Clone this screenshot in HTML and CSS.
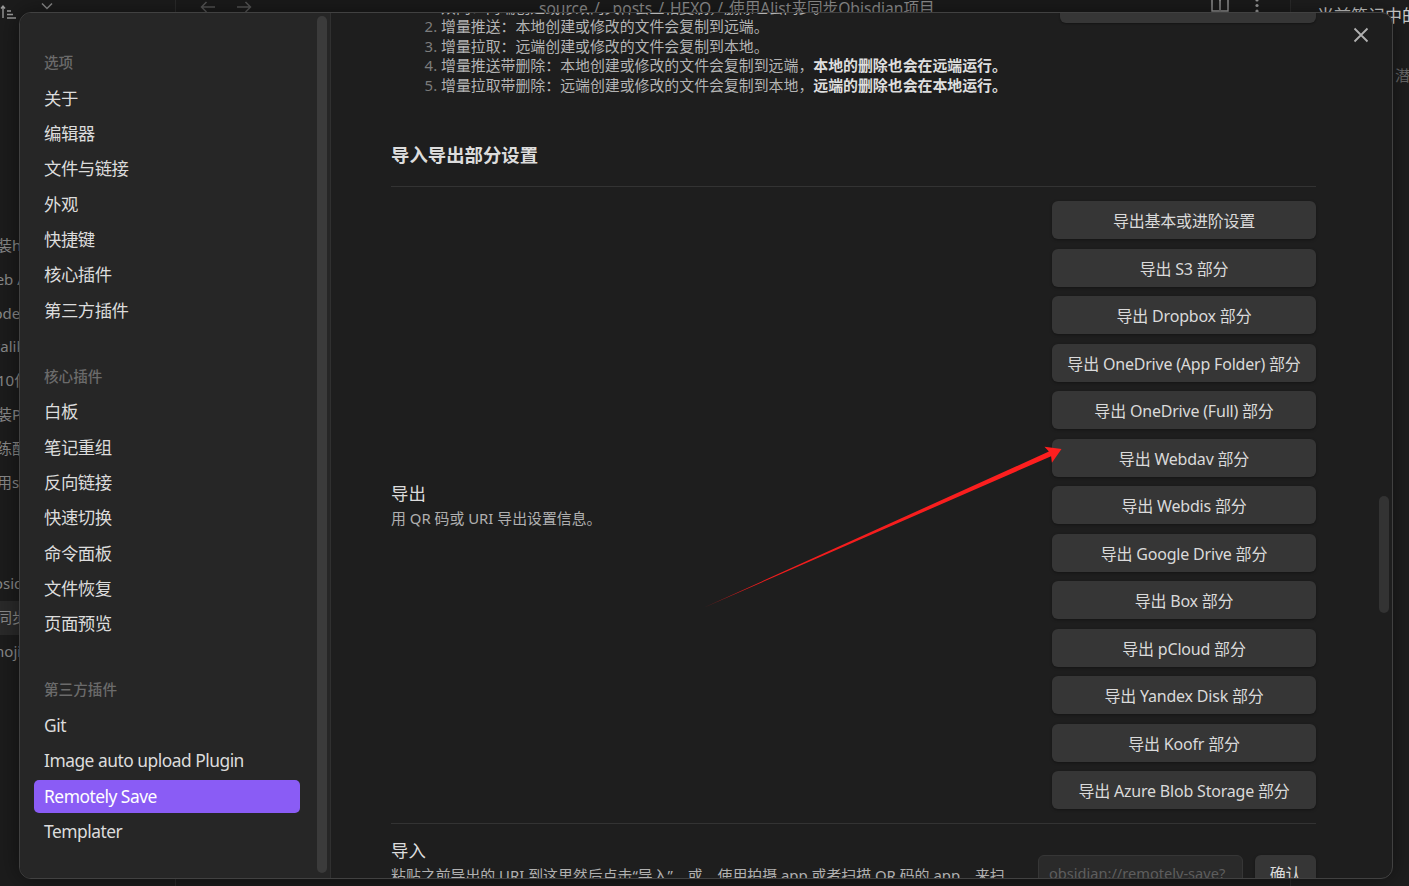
FILE: index.html
```html
<!DOCTYPE html>
<html lang="zh-CN">
<head>
<meta charset="utf-8">
<title>设置 - Remotely Save</title>
<link rel="stylesheet" href="styles.css">
</head>
<body>
<div class="app">
  <aside class="app-left">
    <div class="app-left-top">
      <svg class="ico-sort" width="18" height="16" viewBox="0 0 18 16"><path d="M3 14V2M1 4.5L3 2l2 2.5M7 7h4M7 10.5h6M7 14h9" fill="none" stroke="#9a9a9a" stroke-width="1.4"/></svg>
      <svg class="ico-chev" width="12" height="8" viewBox="0 0 12 8"><path d="M1 1.5l5 5 5-5" fill="none" stroke="#8a8a8a" stroke-width="1.5"/></svg>
    </div>
    <div class="file-list">
      <div class="file">安装hexo博客</div>
      <div class="file">Web App</div>
      <div class="file">Node编译</div>
      <div class="file">Vitalik</div>
      <div class="file">第10作品</div>
      <div class="file">安装PicGo</div>
      <div class="file">训练配置</div>
      <div class="file">使用srcset</div>
      <div class="file"></div>
      <div class="file"></div>
      <div class="file">Obsidian</div>
      <div class="file active">的同步</div>
      <div class="file">Emoji</div>
    </div>
  </aside>
  <main class="app-main">
    <div class="app-top">
      <div class="nav-arrows">
        <svg width="16" height="12" viewBox="0 0 16 12"><path d="M15 6H1.5M6.5 1L1.5 6l5 5" fill="none" stroke="#555" stroke-width="1.5"/></svg>
        <svg width="16" height="12" viewBox="0 0 16 12"><path d="M1 6h13.5M9.5 1l5 5-5 5" fill="none" stroke="#555" stroke-width="1.5"/></svg>
      </div>
      <div class="crumb"><span>_source</span><span class="sep">/</span><span>_posts</span><span class="sep">/</span><span>HEXO</span><span class="sep">/</span><span>使用Alist来同步Obisdian项目</span></div>
      <div class="top-icons">
        <svg width="18" height="14" viewBox="0 0 18 14"><path d="M1 1h6a2 2 0 0 1 2 2v11M17 1h-6a2 2 0 0 0-2 2M1 1v12h7M17 1v12h-7" fill="none" stroke="#9a9a9a" stroke-width="1.4"/></svg>
        <svg width="6" height="14" viewBox="0 0 6 14"><circle cx="3" cy="2" r="1.6" fill="#9a9a9a"/><circle cx="3" cy="7.5" r="1.6" fill="#9a9a9a"/><circle cx="3" cy="13" r="1.6" fill="#9a9a9a"/></svg>
      </div>
    </div>
  </main>
  <aside class="app-right">
    <div class="right-line">当前笔记中的</div>
    <div class="right-line dim">潜在链接</div>
  </aside>
</div>

<div class="modal">
  <nav class="sidebar">
    <div class="nav">
      <div class="group">
        <div class="group-title">选项</div>
        <div class="nav-item">关于</div>
        <div class="nav-item">编辑器</div>
        <div class="nav-item">文件与链接</div>
        <div class="nav-item">外观</div>
        <div class="nav-item">快捷键</div>
        <div class="nav-item">核心插件</div>
        <div class="nav-item">第三方插件</div>
      </div>
      <div class="group">
        <div class="group-title">核心插件</div>
        <div class="nav-item">白板</div>
        <div class="nav-item">笔记重组</div>
        <div class="nav-item">反向链接</div>
        <div class="nav-item">快速切换</div>
        <div class="nav-item">命令面板</div>
        <div class="nav-item">文件恢复</div>
        <div class="nav-item">页面预览</div>
      </div>
      <div class="group">
        <div class="group-title">第三方插件</div>
        <div class="nav-item">Git</div>
        <div class="nav-item">Image auto upload Plugin</div>
        <div class="nav-item active">Remotely Save</div>
        <div class="nav-item">Templater</div>
      </div>
    </div>
    <div class="sb-thumb"></div>
  </nav>

  <section class="content">
    <div class="scroll">
      <div class="inner">
        <div class="setting top-setting">
          <div class="info">
            <ol class="dir-list">
              <li>双向：两端创建或修改的文件会互相复制，删除也会同步。</li>
              <li>增量推送：本地创建或修改的文件会复制到远端。</li>
              <li>增量拉取：远端创建或修改的文件会复制到本地。</li>
              <li>增量推送带删除：本地创建或修改的文件会复制到远端，<strong>本地的删除也会在远端运行。</strong></li>
              <li>增量拉取带删除：远端创建或修改的文件会复制到本地，<strong>远端的删除也会在本地运行。</strong></li>
            </ol>
          </div>
          <div class="select"></div>
        </div>

        <div class="heading">导入导出部分设置</div>

        <div class="setting item">
          <div class="info">
            <div class="name">导出</div>
            <div class="desc">用 QR 码或 URI 导出设置信息。</div>
          </div>
          <div class="buttons">
            <button class="btn">导出基本或进阶设置</button>
            <button class="btn">导出 S3 部分</button>
            <button class="btn">导出 Dropbox 部分</button>
            <button class="btn">导出 OneDrive (App Folder) 部分</button>
            <button class="btn">导出 OneDrive (Full) 部分</button>
            <button class="btn">导出 Webdav 部分</button>
            <button class="btn">导出 Webdis 部分</button>
            <button class="btn">导出 Google Drive 部分</button>
            <button class="btn">导出 Box 部分</button>
            <button class="btn">导出 pCloud 部分</button>
            <button class="btn">导出 Yandex Disk 部分</button>
            <button class="btn">导出 Koofr 部分</button>
            <button class="btn">导出 Azure Blob Storage 部分</button>
          </div>
        </div>

        <div class="setting item">
          <div class="info import-info">
            <div class="name">导入</div>
            <div class="desc">粘贴之前导出的 URI 到这里然后点击“导入”，或，使用拍摄 app 或者扫描 QR 码的 app，来扫描对应的二维码。</div>
          </div>
          <div class="import-ctl">
            <input class="uri" type="text" placeholder="obsidian://remotely-save?">
            <button class="btn ok">确认</button>
          </div>
        </div>
      </div>
    </div>
    <div class="c-thumb"></div>
    <button class="close" aria-label="关闭">
      <svg width="16" height="16" viewBox="0 0 16 16"><path d="M1.5 1.5l13 13M14.5 1.5l-13 13" stroke="#b0b0b0" stroke-width="1.8" fill="none"/></svg>
    </button>
  </section>
</div>

<svg class="annot" width="1409" height="886" viewBox="0 0 1409 886">
  <defs>
    <linearGradient id="ag" x1="703" y1="608" x2="1061" y2="449" gradientUnits="userSpaceOnUse">
      <stop offset="0" stop-color="#b01818"/>
      <stop offset="0.15" stop-color="#f01c1c"/>
      <stop offset="1" stop-color="#ff1f1f"/>
    </linearGradient>
  </defs>
  <polygon points="703,608 1051.1,456.3 1051.9,462.8 1061.5,449 1044.5,446.7 1048.9,451.5" fill="url(#ag)"/>
</svg>
</body>
</html>
```
FILE: styles.css
```css
* { box-sizing: border-box; margin: 0; padding: 0; }

html, body { width: 1409px; height: 886px; }

body {
  position: relative;
  overflow: hidden;
  background: #171717;
  font-family: "Noto Sans", "Noto Sans CJK SC", sans-serif;
  color: #dadada;
}

/* ---------- background application ---------- */
.app { display: flex; height: 886px; }

.app-left {
  width: 176px;
  flex: none;
  background: #1c1c1c;
  border-right: 1px solid #2b2b2b;
  overflow: hidden;
}
.app-left-top { display: flex; align-items: flex-start; height: 229px; padding: 3px 0 0 0; }
.ico-sort { margin-top: 1px; }
.ico-chev { margin: -1px 0 0 23px; }

.file-list { display: flex; flex-direction: column; }
.file {
  height: 33.8px;
  line-height: 33.8px;
  margin-left: -18px;
  font-size: 15px;
  color: #8a8a8a;
  white-space: nowrap;
}
.file.active { background: #2a2a2a; }

.app-main { flex: 1; background: #1b1b1b; border-right: 1px solid #2b2b2b; }
.app-top { display: flex; align-items: flex-start; height: 16px; }
.nav-arrows { display: flex; gap: 20px; margin: 1px 0 0 24px; }
.crumb {
  display: flex;
  margin: -2px 0 0 280px;
  font-size: 15.6px;
  line-height: 20px;
  color: #8f8f8f;
  white-space: nowrap;
}
.sep { margin: 0 6px; }
.top-icons { display: flex; gap: 25px; margin: -2px 0 0 auto; padding-right: 30px; }

.app-right { width: 118px; flex: none; background: #1e1e1e; padding: 5px 0 0 26px; overflow: hidden; }
.right-line { font-size: 17px; line-height: 22px; color: #cfcfcf; white-space: nowrap; }
.right-line.dim { margin: 37px 0 0 78px; color: #6a6a6a; font-size: 15px; }

/* ---------- modal ---------- */
.modal {
  position: absolute;
  left: 19px;
  top: 12px;
  width: 1374px;
  height: 867px;
  display: flex;
  background: #1e1e1e;
  border: 1px solid #414141;
  border-radius: 12px;
  overflow: hidden;
  box-shadow: 0 0 24px rgba(0, 0, 0, 0.45);
}

.sidebar {
  width: 311px;
  flex: none;
  display: flex;
  background: #262626;
  border-right: 1px solid #303030;
  padding: 0 3px 5px 14px;
}
.nav { width: 266px; flex: none; padding-top: 39px; }
.group { display: flow-root; }
.group + .group { padding-top: 36.4px; }
.group-title {
  height: 20px;
  line-height: 20px;
  padding-left: 10px;
  margin-bottom: 9.5px;
  font-size: 14.6px;
  font-weight: 500;
  color: #6b6b6b;
}
.nav-item {
  height: 33px;
  line-height: 33px;
  margin-bottom: 2.4px;
  padding-left: 10px;
  border-radius: 5px;
  font-size: 17.4px;
  letter-spacing: -0.5px;
  color: #dcdcdc;
  white-space: nowrap;
}
.nav-item.active { background: #8a5cf5; color: #ffffff; }

.sb-thumb {
  width: 10px;
  margin: 3px 0 0 17px;
  background: #3b3b3b;
  border-radius: 5px;
}

/* ---------- content ---------- */
.content { flex: 1; display: flex; position: relative; overflow: hidden; }
.scroll { width: 925px; flex: none; margin-left: 60px; }
.inner { margin-top: -15.25px; }

.setting { display: flex; justify-content: space-between; }

.dir-list {
  padding-left: 50px;
  font-size: 14.9px;
  line-height: 19.5px;
  color: #b4b4b4;
}
.dir-list li::marker { color: #7c7c7c; }
.dir-list strong { color: #dedede; font-weight: 700; }

.select {
  width: 256px;
  height: 36px;
  margin-top: -10.75px;
  background: #363636;
  border-radius: 6px;
  box-shadow: 0 1px 2px rgba(0, 0, 0, 0.35);
  flex: none;
}

.heading {
  padding: 47.75px 0 19px;
  font-size: 18.4px;
  line-height: 24px;
  font-weight: 700;
  color: #dcdcdc;
}

.item {
  align-items: center;
  border-top: 1px solid #333333;
  padding: 14px 0;
}
.name { font-size: 17.4px; line-height: 24px; color: #dcdcdc; }
.desc { margin-top: 2px; font-size: 14.9px; line-height: 22px; color: #b0b0b0; }

.buttons { display: flex; flex-direction: column; gap: 9.5px; width: 264px; flex: none; }
.btn {
  height: 38px;
  border: none;
  border-radius: 6px;
  background: #363636;
  box-shadow: 0 1px 3px rgba(0, 0, 0, 0.35);
  font-family: "Noto Sans", "Noto Sans CJK SC", sans-serif;
  font-size: 16px;
  letter-spacing: -0.2px;
  color: #dadada;
  white-space: nowrap;
}

.import-info { flex: 0 1 620px; }
.import-ctl { display: flex; gap: 12px; flex: none; }
.uri {
  width: 205px;
  height: 36px;
  padding: 0 10px;
  background: #2a2a2a;
  border: 1px solid #363636;
  border-radius: 6px;
  font-family: "Noto Sans", "Noto Sans CJK SC", sans-serif;
  font-size: 14.6px;
  color: #dadada;
}
.uri::placeholder { color: #5e5e5e; }
.ok { width: 61px; height: 36px; }

.c-thumb {
  width: 10px;
  height: 117px;
  flex: none;
  margin: 483px 0 0 63px;
  background: #333333;
  border-radius: 5px;
}

.close {
  position: absolute;
  top: 10px;
  right: 19.5px;
  width: 24px;
  height: 24px;
  display: flex;
  align-items: center;
  justify-content: center;
  background: none;
  border: none;
}

/* ---------- annotation ---------- */
.annot { position: absolute; left: 0; top: 0; pointer-events: none; }
```
